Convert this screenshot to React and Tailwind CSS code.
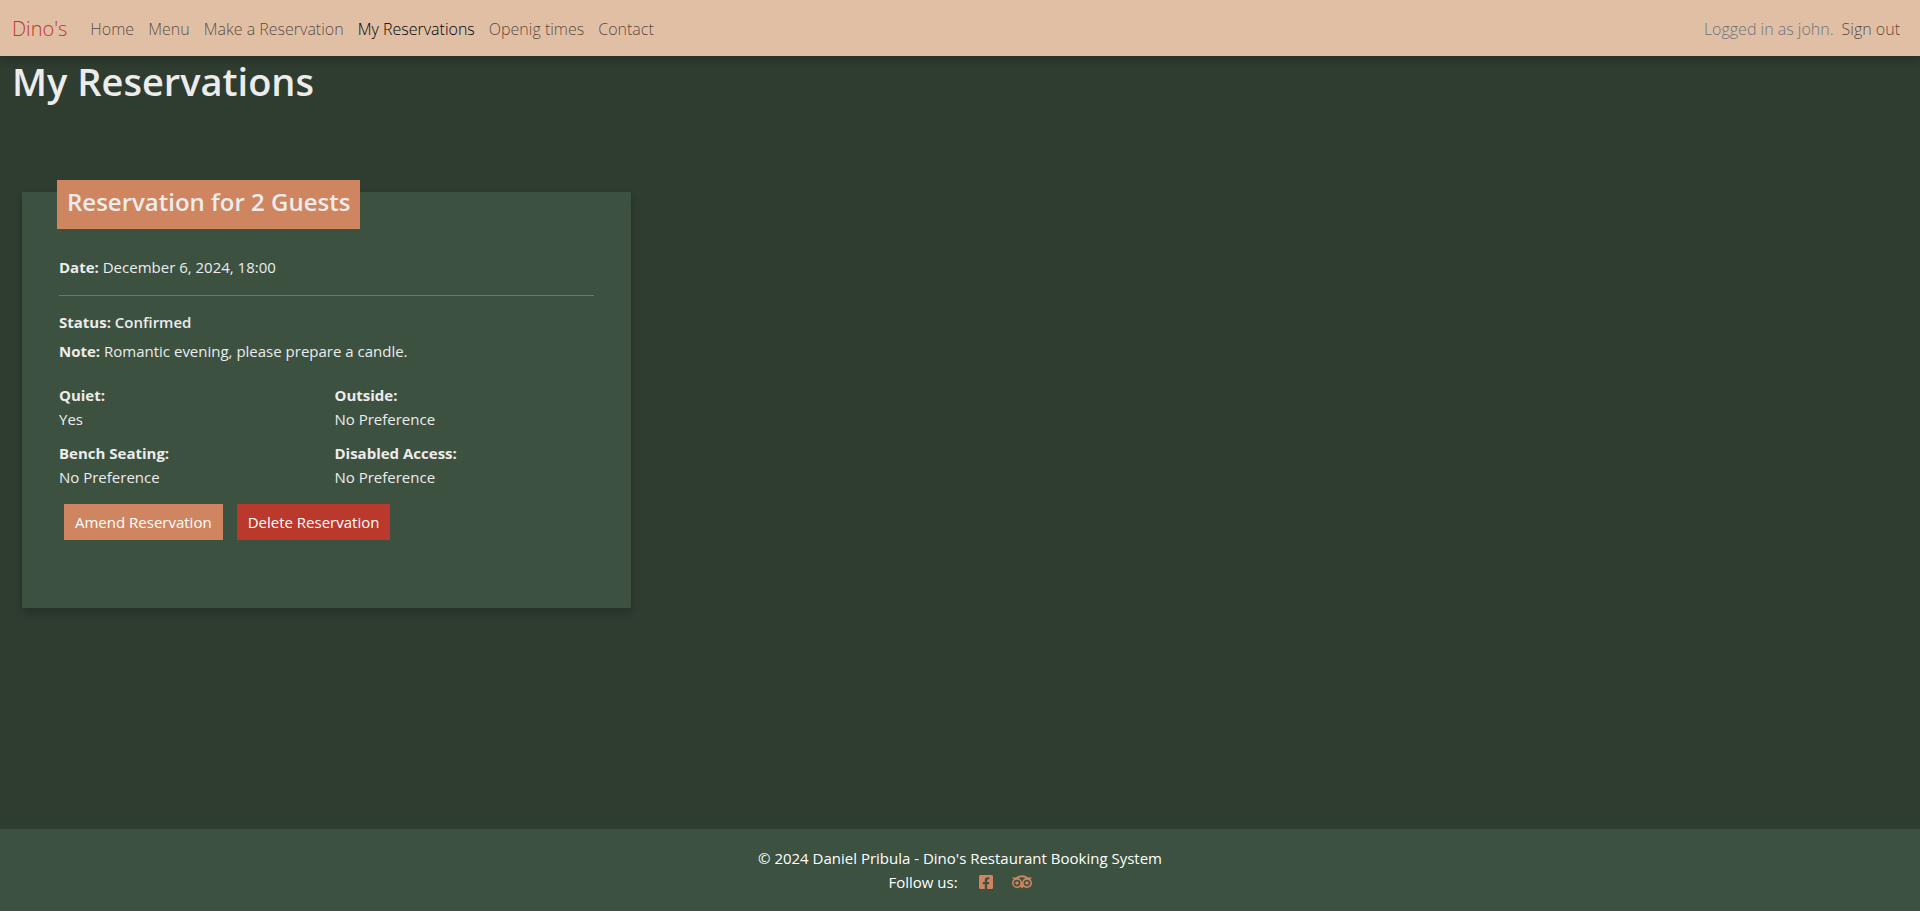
import React from "react";
import { FaFacebookSquare, FaTripadvisor } from "react-icons/fa";

const links = [
  { label: "Home" },
  { label: "Menu" },
  { label: "Make a Reservation" },
  { label: "My Reservations", active: true },
  { label: "Openig times" },
  { label: "Contact" },
];

const preferences = [
  { label: "Quiet:", value: "Yes" },
  { label: "Outside:", value: "No Preference" },
  { label: "Bench Seating:", value: "No Preference" },
  { label: "Disabled Access:", value: "No Preference" },
];

function Navbar() {
  return (
    <nav className="relative flex h-14 items-center bg-[#e0bfa5] px-3 pt-[2px] text-base font-light shadow-[0_4px_8px_rgba(0,0,0,0.2)]">
      <a href="#home" className="mr-4 text-xl text-[#bb392c]">
        Dino's
      </a>
      <ul className="flex">
        {links.map((link) => (
          <li key={link.label}>
            <a
              href="#page"
              className={link.active ? "px-[7px] text-black" : "px-[7px] text-black/65"}
            >
              {link.label}
            </a>
          </li>
        ))}
      </ul>
      <div className="ml-auto flex">
        <span className="text-[#6c757d]">Logged in as john.</span>
        <a href="#signout" className="px-2 text-black/65">
          Sign out
        </a>
      </div>
    </nav>
  );
}

function ReservationCard() {
  return (
    <article className="mt-[87px] bg-[#3d5141] px-[37px] pb-[68px] shadow-[0_4px_8px_rgba(0,0,0,0.2)]">
      <h2 className="-mx-[2px] -mt-3 mb-[26px] inline-block h-[49px] bg-[#cf8560] px-[10px] pt-[6px] text-2xl font-semibold text-[#ececec]">
        Reservation for 2 Guests
      </h2>
      <p>
        <strong className="font-bold">Date:</strong> December 6, 2024, 18:00
      </p>
      <hr className="mt-4 mb-[14px] border-[#657a69]" />
      <p className="mb-[5px] font-semibold">
        <strong className="font-bold">Status:</strong> Confirmed
      </p>
      <p>
        <strong className="font-bold">Note:</strong> Romantic evening, please prepare a candle.
      </p>
      <dl className="mt-5 grid grid-cols-2 gap-x-4 gap-y-[10px]">
        {preferences.map((item) => (
          <div key={item.label}>
            <dt className="font-bold">{item.label}</dt>
            <dd>{item.value}</dd>
          </div>
        ))}
      </dl>
      <div className="mt-[15px] flex gap-[14px] pl-[5px] text-white">
        <button type="button" className="h-9 bg-[#cf8560] px-[11px]">
          Amend Reservation
        </button>
        <button type="button" className="h-9 bg-[#bb392c] px-[11px]">
          Delete Reservation
        </button>
      </div>
    </article>
  );
}

function Footer() {
  return (
    <footer className="bg-[#3d5141] py-[17px] text-center text-white">
      <p>© 2024 Daniel Pribula - Dino's Restaurant Booking System</p>
      <div className="flex items-center justify-center">
        <span>Follow us:</span>
        <a href="#facebook" aria-label="Facebook" className="ml-5 text-[#cf8560]">
          <FaFacebookSquare size={16} />
        </a>
        <a href="#tripadvisor" aria-label="Tripadvisor" className="ml-[18px] text-[#cf8560]">
          <FaTripadvisor size={20} />
        </a>
      </div>
    </footer>
  );
}

export default function App() {
  return (
    <div className="flex min-h-screen flex-col bg-[#2f3c30] font-['Open_Sans','Noto_Sans',sans-serif] text-[15px] leading-6 text-[#ececec]">
      <Navbar />
      <main className="grow px-3 pb-6">
        <h1 className="pt-px text-[38px] leading-[48px] font-semibold">My Reservations</h1>
        <section className="w-full pr-[13px] pl-[10px] lg:w-1/3">
          <ReservationCard />
        </section>
      </main>
      <Footer />
    </div>
  );
}
